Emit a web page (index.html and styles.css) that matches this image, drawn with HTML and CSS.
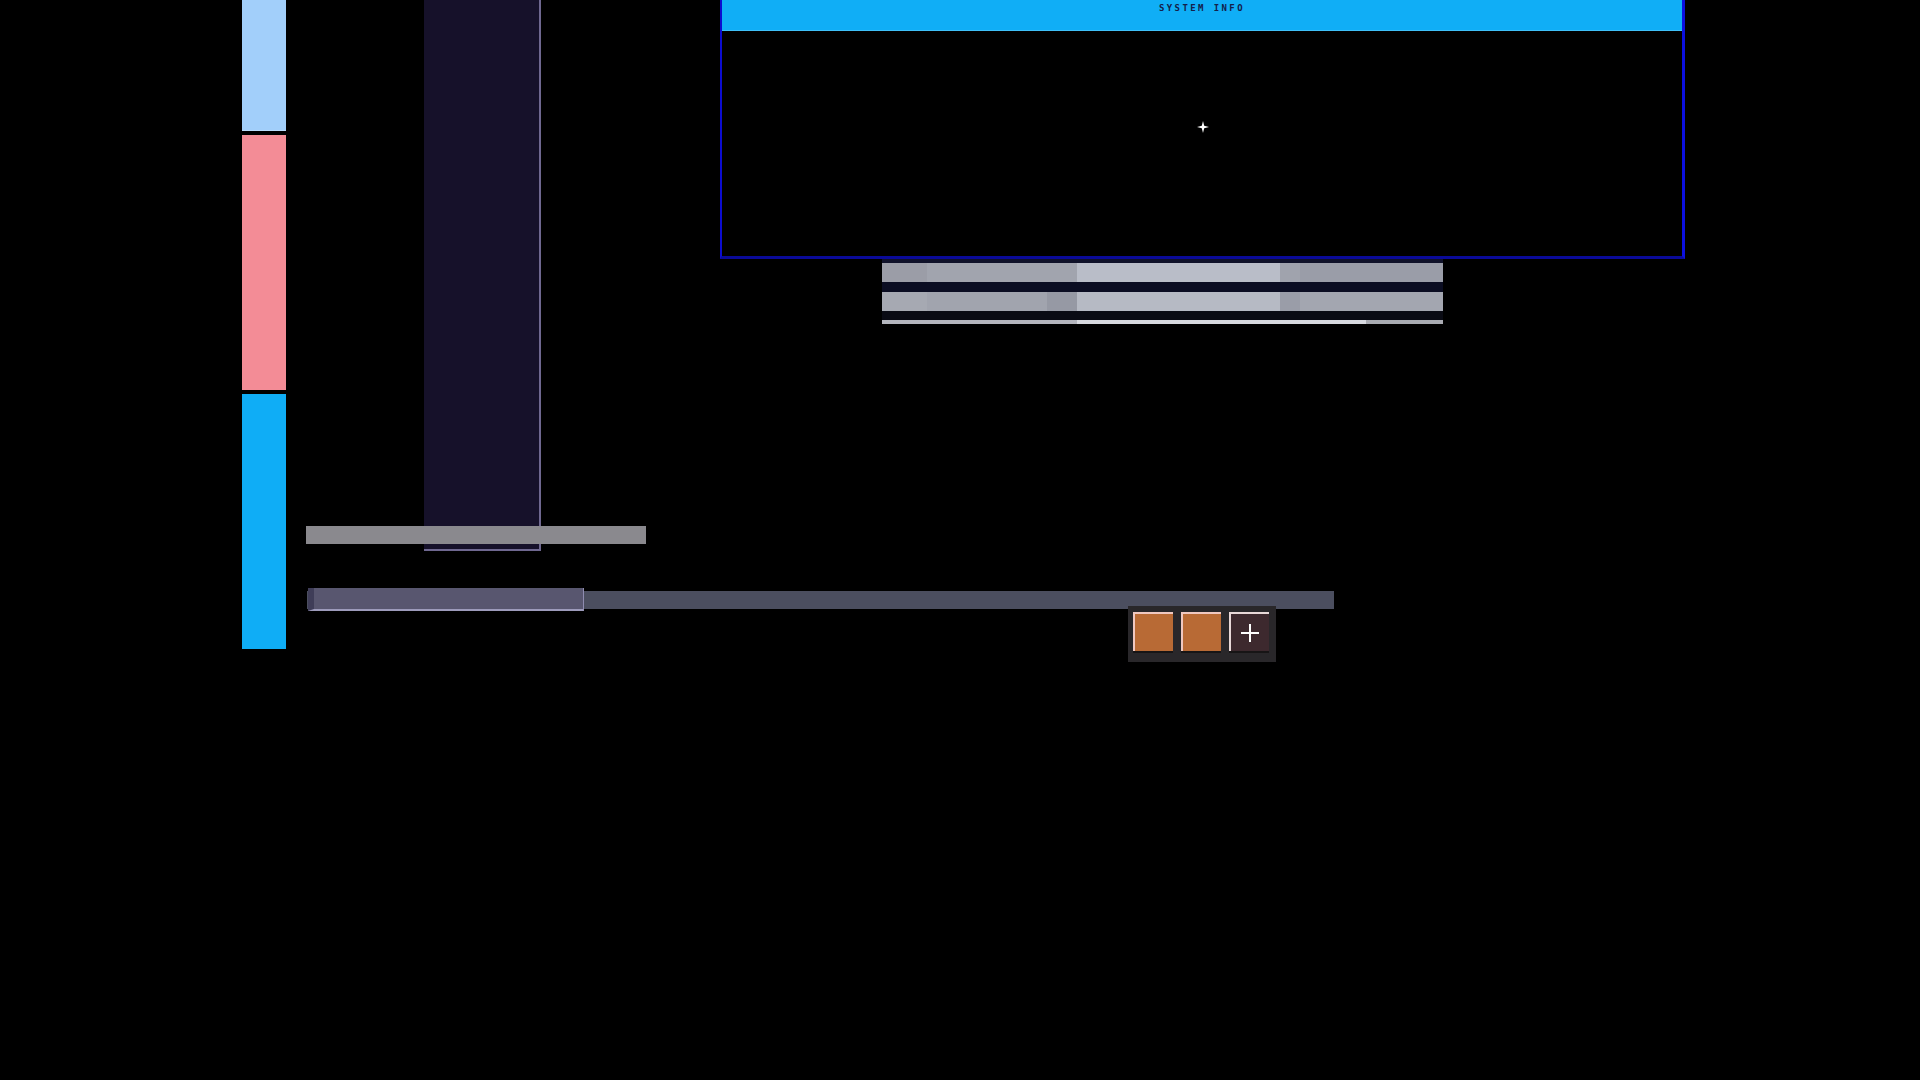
FILE: index.html
```html
<!DOCTYPE html>
<html>
<head>
<meta charset="utf-8">
<link rel="stylesheet" href="styles.css">
</head>
<body>
<div class="desk">
  <div class="meter-stack">
    <div class="seg seg-light"></div>
    <div class="seg seg-pink"></div>
    <div class="seg seg-blue"></div>
  </div>

  <div class="column"></div>
  <div class="gray-bar"></div>

  <div class="slider">
    <div class="thumb"></div>
  </div>

  <div class="btn-group">
    <div class="btn btn-orange"></div>
    <div class="btn btn-orange"></div>
    <div class="btn btn-add">
      <svg width="22" height="22" viewBox="0 0 22 22"><path d="M11 2V20M2 11H20" stroke="#ffffff" stroke-width="2"/></svg>
    </div>
  </div>

  <div class="window">
    <div class="titlebar"><span class="title">SYSTEM INFO</span></div>
    <div class="win-body">
      <svg class="sparkle" width="12" height="12" viewBox="0 0 12 12"><path d="M6 0L7.2 4.8L12 6L7.2 7.2L6 12L4.8 7.2L0 6L4.8 4.8Z" fill="#ffffff"/></svg>
    </div>
  </div>

  <div class="table">
    <div class="row">
      <div class="cell c1"></div><div class="cell c2"></div><div class="cell c3"></div><div class="cell c4"></div><div class="cell c5"></div>
    </div>
    <div class="gap"></div>
    <div class="row">
      <div class="cell c1 r2a"></div><div class="cell c2a"></div><div class="cell c2b"></div><div class="cell c3 r2c3"></div><div class="cell c4 r2b"></div><div class="cell c5 r2c"></div>
    </div>
    <div class="gap gap-dark"></div>
    <div class="foot">
      <div class="f1"></div><div class="f2"></div><div class="f3"></div>
    </div>
  </div>
</div>
</body>
</html>
```

FILE: styles.css
```css
html, body {
  margin: 0;
  padding: 0;
  background: #000000;
  width: 1920px;
  height: 1080px;
  overflow: hidden;
  font-family: "DejaVu Sans Mono", "Liberation Mono", monospace;
}

.desk {
  position: relative;
  width: 1920px;
  height: 1080px;
}

.meter-stack {
  position: absolute;
  left: 242px;
  top: -124px;
  width: 44px;
  display: flex;
  flex-direction: column;
  gap: 4px;
}

.seg {
  height: 255px;
}

.seg-light {
  background: #a2cffa;
  border-bottom: 1px solid #b9dcfb;
  height: 254px;
}

.seg-pink {
  background: #f38c96;
}

.seg-blue {
  background: #0fadf6;
}

.column {
  position: absolute;
  left: 424px;
  top: 0;
  width: 115px;
  height: 549px;
  background: #16112a;
  border-right: 2px solid #6f6890;
  border-bottom: 2px solid #6f6890;
}

.gray-bar {
  position: absolute;
  left: 306px;
  top: 526px;
  width: 340px;
  height: 18px;
  background: #8a898e;
}

.slider {
  position: absolute;
  left: 307px;
  top: 591px;
  width: 1027px;
  height: 18px;
  background: #4b4e5f;
}

.thumb {
  position: absolute;
  left: 1px;
  top: -3px;
  width: 269px;
  height: 21px;
  background: #58566f;
  border-left: 6px solid #3f3d58;
  border-right: 1px solid #8f8cb0;
  border-bottom: 2px solid #9d9bbb;
}

.btn-group {
  position: absolute;
  left: 1128px;
  top: 606px;
  width: 148px;
  height: 56px;
  box-sizing: border-box;
  background: #29272a;
  padding: 6px 5px;
  display: flex;
  gap: 8px;
  align-items: flex-start;
}

.btn {
  width: 40px;
  height: 39px;
  box-sizing: border-box;
  border-top: 2px solid #f0c8c0;
  border-left: 2px solid #f0c8c0;
  box-shadow: 0 2px 0 #171516;
  display: flex;
  align-items: center;
  justify-content: center;
}

.btn-orange {
  background: #b86a35;
}

.btn-add {
  background: #3d292e;
  border-top-color: #e8d8d8;
  border-left-color: #e8d8d8;
}

.window {
  position: absolute;
  left: 720px;
  top: 0;
  width: 965px;
  height: 259px;
  box-sizing: border-box;
  border-left: 2px solid #0c0cd0;
  border-right: 3px solid #0c10e0;
  border-bottom: 3px solid #0a0a98;
  display: flex;
  flex-direction: column;
  background: #000000;
}

.titlebar {
  height: 31px;
  box-sizing: border-box;
  background: #10aef6;
  border-bottom: 1px solid #3fc0f8;
  display: flex;
  justify-content: center;
  align-items: flex-start;
}

.title {
  font-size: 9px;
  font-weight: bold;
  letter-spacing: 2.4px;
  color: #14204a;
  margin-top: 3px;
  line-height: 10px;
}

.win-body {
  flex: 1;
  position: relative;
}

.sparkle {
  position: absolute;
  left: 475px;
  top: 90px;
}

.table {
  position: absolute;
  left: 882px;
  top: 259px;
  width: 561px;
  display: flex;
  flex-direction: column;
  background: #0a0c18;
  border-top: 4px solid #10122a;
}

.row {
  display: flex;
  height: 19px;
}

.gap {
  height: 10px;
  background: #0b0d22;
}

.gap-dark {
  height: 9px;
  background: #0a0b14;
}

.cell {
  height: 100%;
}

.c1 { width: 45px; background: #9b9da7; }
.c2 { width: 150px; background: #a1a4ae; }
.c3 { width: 203px; background: #b9bdc8; }
.c4 { width: 20px; background: #a0a3ad; }
.c5 { width: 143px; background: #9a9da8; }

.c2a { width: 120px; background: #a1a4ae; }
.c2b { width: 30px; background: #9699a4; }

.r2a { background: #a6a9b2; }
.r2c3 { background: #b6bac4; }
.r2b { background: #9a9da8; }
.r2c { background: #a3a6b0; }

.foot {
  display: flex;
  height: 4px;
}

.f1 { width: 195px; background: #b4b6be; }
.f2 { width: 289px; background: #d8dae0; }
.f3 { width: 77px; background: #a9abb2; }
```
